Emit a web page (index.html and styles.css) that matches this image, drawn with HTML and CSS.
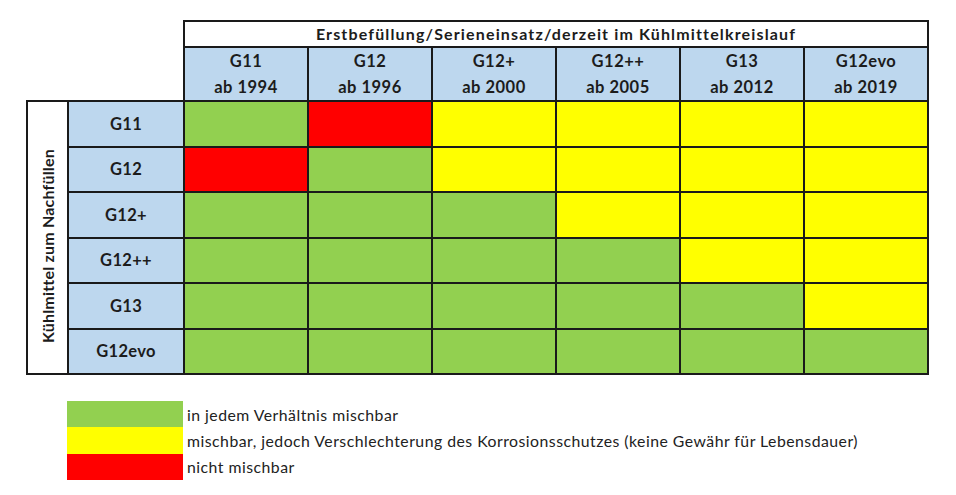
FILE: index.html
```html
<!DOCTYPE html>
<html lang="de">
<head>
<meta charset="utf-8">
<title>Kühlmittel Mischbarkeit</title>
<link rel="stylesheet" href="styles.css">
</head>
<body>
<div class="page">
  <table class="matrix">
    <colgroup>
      <col class="c-vert">
      <col class="c-label">
      <col class="c-data"><col class="c-data"><col class="c-data">
      <col class="c-data"><col class="c-data"><col class="c-data">
    </colgroup>
    <tr class="r-title">
      <td class="blank" colspan="2" rowspan="2"></td>
      <th class="title" colspan="6">Erstbefüllung/Serieneinsatz/derzeit im Kühlmittelkreislauf</th>
    </tr>
    <tr class="r-head">
      <th class="head">G11<br>ab 1994</th>
      <th class="head">G12<br>ab 1996</th>
      <th class="head">G12+<br>ab 2000</th>
      <th class="head">G12++<br>ab 2005</th>
      <th class="head">G13<br>ab 2012</th>
      <th class="head">G12evo<br>ab 2019</th>
    </tr>
    <tr class="r-data">
      <th class="vert" rowspan="6"><div class="vert-inner"><span>Kühlmittel zum Nachfüllen</span></div></th>
      <th class="rowlabel">G11</th>
      <td class="g"></td><td class="r"></td><td class="y"></td><td class="y"></td><td class="y"></td><td class="y"></td>
    </tr>
    <tr class="r-data">
      <th class="rowlabel">G12</th>
      <td class="r"></td><td class="g"></td><td class="y"></td><td class="y"></td><td class="y"></td><td class="y"></td>
    </tr>
    <tr class="r-data">
      <th class="rowlabel">G12+</th>
      <td class="g"></td><td class="g"></td><td class="g"></td><td class="y"></td><td class="y"></td><td class="y"></td>
    </tr>
    <tr class="r-data">
      <th class="rowlabel">G12++</th>
      <td class="g"></td><td class="g"></td><td class="g"></td><td class="g"></td><td class="y"></td><td class="y"></td>
    </tr>
    <tr class="r-data">
      <th class="rowlabel">G13</th>
      <td class="g"></td><td class="g"></td><td class="g"></td><td class="g"></td><td class="g"></td><td class="y"></td>
    </tr>
    <tr class="r-data">
      <th class="rowlabel">G12evo</th>
      <td class="g"></td><td class="g"></td><td class="g"></td><td class="g"></td><td class="g"></td><td class="g"></td>
    </tr>
  </table>

  <div class="legend">
    <div class="legend-row"><span class="swatch g"></span><span class="legend-text">in jedem Verhältnis mischbar</span></div>
    <div class="legend-row"><span class="swatch y"></span><span class="legend-text">mischbar, jedoch Verschlechterung des Korrosionsschutzes (keine Gewähr für Lebensdauer)</span></div>
    <div class="legend-row"><span class="swatch r"></span><span class="legend-text">nicht mischbar</span></div>
  </div>
</div>
</body>
</html>
```

FILE: styles.css
```css
html, body {
  margin: 0;
  padding: 0;
  background: #ffffff;
}

body {
  font-family: Lato, "Open Sans", sans-serif;
  color: #1c1c1c;
}

.page {
  padding: 20px 0 0 26px;
}

.matrix {
  border-collapse: collapse;
  table-layout: fixed;
  width: 901px;
}

.c-vert { width: 41px; }
.c-label { width: 116px; }
.c-data { width: 124px; }

.matrix th,
.matrix td {
  border: 2px solid #1a1a1a;
  padding: 0;
  text-align: center;
  vertical-align: middle;
  font-weight: 700;
}

.matrix td.blank {
  border: none;
  border-right: 2px solid #1a1a1a;
  border-bottom: 2px solid #1a1a1a;
  background: #ffffff;
}

.r-title { height: 26px; }
.r-head { height: 51.5px; }
.r-data { height: 45.5px; }

.title {
  background: #ffffff;
  font-size: 16px;
  letter-spacing: 1.15px;
  line-height: 20px;
}

.head {
  background: #bdd7ee;
  font-size: 16.5px;
  letter-spacing: 0.5px;
  line-height: 26px;
}

.rowlabel {
  background: #bdd7ee;
  font-size: 16.5px;
  letter-spacing: 0.3px;
}

.matrix th.vert {
  background: #ffffff;
  font-size: 16px;
  letter-spacing: 0.2px;
  padding-top: 18px;
}

.vert-inner {
  display: flex;
  justify-content: center;
  align-items: center;
}

.vert-inner span {
  display: block;
  writing-mode: vertical-rl;
  transform: rotate(180deg);
  white-space: nowrap;
  line-height: 20px;
}

.g { background: #92d050; }
.y { background: #ffff00; }
.r { background: #ff0000; }

.legend {
  display: flex;
  flex-direction: column;
  margin: 26px 0 0 41px;
}

.legend-row {
  display: flex;
  align-items: center;
  height: 26.3px;
}

.swatch {
  display: block;
  width: 116px;
  height: 100%;
}

.legend-text {
  padding-left: 4px;
  font-size: 15.8px;
  letter-spacing: 0.48px;
  color: #222222;
}
```
